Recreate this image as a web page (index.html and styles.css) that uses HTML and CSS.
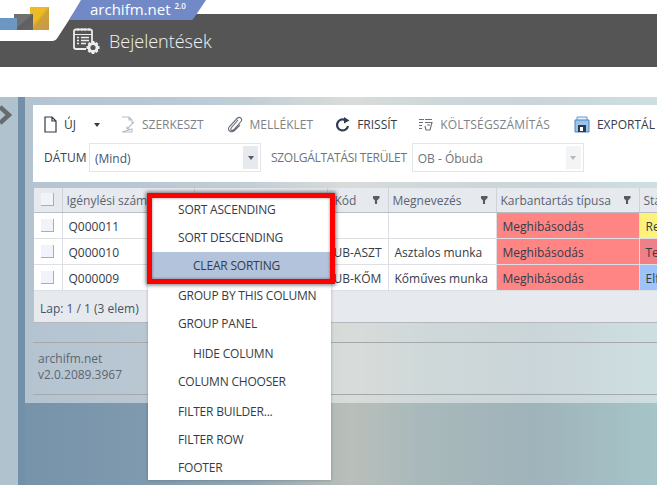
FILE: index.html
```html
<!DOCTYPE html>
<html lang="hu">
  <head>
    <meta charset="UTF-8" />
    <title>Bejelentések</title>
    <link rel="stylesheet" href="styles.css">
  </head>
  <body>
    <header class="topbar">
      <svg class="logo" width="82" height="41" viewBox="0 0 82 41">
        <defs>
          <linearGradient id="gold" x1="0" y1="0" x2="1" y2="1">
            <stop offset="0.45" stop-color="#eebb22" />
            <stop offset="0.55" stop-color="#cfa03a" />
            <stop offset="1" stop-color="#c39a4c" />
          </linearGradient>
          <linearGradient id="grey" x1="0" y1="0" x2="1" y2="1">
            <stop offset="0.45" stop-color="#707070" />
            <stop offset="0.55" stop-color="#5f5f5f" />
            <stop offset="1" stop-color="#666" />
          </linearGradient>
        </defs>
        <path d="M0 0H82L58 37Q56 41 52 41H0Z" fill="#fff" />
        <rect x="30" y="7" width="19" height="23" fill="url(#gold)" />
        <rect x="14" y="14" width="19" height="16" fill="url(#grey)" />
        <rect x="0" y="18" width="17" height="12" fill="#6b97c2" />
      </svg>
      <div class="tab">archifm.net<sup>2.0</sup></div>
      <div class="title">
        <svg width="28" height="28" viewBox="0 0 28 28" fill="none" stroke="#ececec">
          <path d="M19 15V4.500Q19 2.500 17 2.500H3Q1 2.500 1 4.500V20Q1 22 3 22H13" stroke-width="1.800" />
          <path d="M1 7.500H19M5 1V4M9 1V4M12 1V4M16 1V4" />
          <path d="M4 10.500H6M8 10.500H16M4 13.500H6M8 13.500H16M4 16.500H6M8 16.500H13" stroke-width="1.400" />
          <circle cx="20" cy="20.500" r="4" stroke-width="2.800" />
          <path d="M20 14V16M20 25V27M13.500 20.500H15.500M24.500 20.500H26.500M15.500 16L17 17.500M23 23.500L24.500 25M15.500 25L17 23.500M23 17.500L24.500 16" stroke-width="2.800" />
        </svg>
        <h1>Bejelentések</h1>
      </div>
    </header>

    <main class="page">
      <aside class="rail">
        <svg width="12" height="20" viewBox="0 0 12 20" fill="none" stroke="#666b70" stroke-width="4.500">
          <path d="M0 2L9 10L0 18" />
        </svg>
      </aside>
      <div class="strip"></div>
      <div class="stage">
        <section class="panel">
          <div class="toolbar">
            <div class="actions">
              <button class="action new">
                <svg width="13" height="17" viewBox="0 0 13 17" fill="none" stroke="#2f3a48" stroke-width="1.200">
                  <path d="M1 1H8L12 5V16H1ZM8 1V5H12" />
                </svg>
                ÚJ
              </button>
              <span class="caret"></span>
              <button class="action off">
                <svg width="14" height="17" viewBox="0 0 14 17" fill="none" stroke="#b9bdc2" stroke-width="1.100">
                  <path d="M1 1H8L11 4V7M11 13V16H1ZM8 1V4H11M6 13L13 6M6 13V10.500M6 13H8.500" />
                </svg>
                SZERKESZT
              </button>
              <button class="action off">
                <svg width="16" height="17" viewBox="0 0 16 17" fill="none" stroke="#666c74" stroke-width="1.100">
                  <path d="M11 4L4.500 11.500C2.500 14 5 15.500 7 13.500L14 5.500C16 2.500 12.500 0 10 2.500L2.500 10.500C-.5 14 4 18 8 14L13 9" />
                </svg>
                MELLÉKLET
              </button>
              <button class="action refresh">
                <svg width="14" height="15" viewBox="0 0 14 15" fill="none" stroke="#2f3f52" stroke-width="2.200">
                  <path d="M12 9A5.500 5.500 0 1 1 9 3" />
                  <path d="M8 0L13.500 3.500L8 6.500Z" fill="#2f3f52" stroke="none" />
                </svg>
                FRISSÍT
              </button>
              <button class="action off wide">
                <svg width="15" height="15" viewBox="0 0 15 15" fill="none" stroke="#6a7078" stroke-width="1.100">
                  <path d="M1 2.500H6M1 5.500H5M1 8.500H4M1 11.500H4M7 2.500H14M7 5.500H14L12 13H8L7 9M9 8H12" />
                </svg>
                KÖLTSÉGSZÁMÍTÁS
              </button>
              <button class="action">
                <svg width="16" height="17" viewBox="0 0 16 17">
                  <path d="M3 1H13V6H3Z" fill="#e8f2fb" stroke="#5b9bd5" />
                  <path d="M1 4H15V16H1Z" fill="#9cc4e8" stroke="#4a86c0" />
                  <rect x="4" y="9" width="8" height="7" fill="#2f3a48" />
                  <rect x="6" y="11" width="3" height="4" fill="#fff" />
                </svg>
                EXPORTÁL
              </button>
            </div>
            <div class="filters">
              <label>DÁTUM</label>
              <div class="select date"><span>(Mind)</span><i class="drop"></i></div>
              <label class="area-label">SZOLGÁLTATÁSI TERÜLET</label>
              <div class="select locked"><span>OB - Óbuda</span><i class="drop"></i></div>
            </div>
          </div>

          <div class="grid">
            <table>
              <colgroup>
                <col class="c-check" /><col class="c-id" /><col class="c-mid" /><col class="c-code" />
                <col class="c-name" /><col class="c-type" /><col class="c-state" />
              </colgroup>
              <thead>
                <tr>
                  <th><i class="box"></i></th>
                  <th>Igénylési szám</th>
                  <th></th>
                  <th class="filt code-head">Kód</th>
                  <th class="filt">Megnevezés</th>
                  <th class="filt">Karbantartás típusa</th>
                  <th>Státusz</th>
                </tr>
              </thead>
              <tbody>
                <tr>
                  <td><i class="box"></i></td><td>Q000011</td><td></td><td></td><td></td>
                  <td class="red">Meghibásodás</td><td class="yellow">Rendben</td>
                </tr>
                <tr>
                  <td><i class="box"></i></td><td>Q000010</td><td></td><td>UB-ASZT</td><td>Asztalos munka</td>
                  <td class="red">Meghibásodás</td><td class="rose">Teljesítve</td>
                </tr>
                <tr>
                  <td><i class="box"></i></td><td>Q000009</td><td></td><td>UB-KŐM</td><td>Kőműves munka</td>
                  <td class="red">Meghibásodás</td><td class="blue">Elfogadva</td>
                </tr>
              </tbody>
            </table>
            <div class="pager">Lap: 1 / 1 (3 elem)</div>
          </div>

          <div class="band"></div>
          <footer class="about">archifm.net<br />v2.0.2089.3967</footer>
        </section>
      </div>
    </main>

    <ul class="menu">
      <li>SORT ASCENDING</li>
      <li>SORT DESCENDING</li>
      <li class="sub selected">CLEAR SORTING</li>
      <li class="tall">GROUP BY THIS COLUMN</li>
      <li>GROUP PANEL</li>
      <li class="sub tall">HIDE COLUMN</li>
      <li>COLUMN CHOOSER</li>
      <li class="tall">FILTER BUILDER...</li>
      <li>FILTER ROW</li>
      <li>FOOTER</li>
    </ul>
    <div class="highlight"></div>
  </body>
</html>
```

FILE: styles.css
```css
html,
body {
  height: 485px;
  overflow: hidden;
}

body {
  margin: 0;
  position: relative;
  background: #fff;
  font-family: "Open Sans", "Noto Sans", sans-serif;
  font-size: 12px;
  color: #333c48;
}

.topbar {
  position: relative;
  height: 67px;
  box-sizing: border-box;
  background: linear-gradient(#fff 14px, #555 14px);
}

.logo {
  position: absolute;
  left: 0;
  top: 0;
}

.tab {
  position: absolute;
  left: 69px;
  top: 0;
  width: 137px;
  height: 20px;
  box-sizing: border-box;
  padding-left: 21px;
  background: #7289c8;
  clip-path: polygon(12px 0, 100% 0, 125px 18px, 123px 20px, 0 20px);
  color: #fff;
  font-size: 15px;
  line-height: 19px;
}

.tab sup {
  font-size: 8px;
  font-weight: 600;
  line-height: 0;
  margin-left: 4px;
  vertical-align: 6px;
}

.title {
  position: absolute;
  left: 73px;
  top: 27px;
  display: flex;
  align-items: center;
  gap: 8px;
  color: #f2f2f2;
}

.title h1 {
  margin: 0;
  font-size: 18px;
  font-weight: 300;
  line-height: 28px;
}

.page {
  display: flex;
  height: 388px;
  margin-top: 30px;
}

.rail {
  width: 18px;
  padding-top: 8px;
  box-sizing: border-box;
  background: #b0c2ce;
}

.rail svg {
  display: block;
}

.strip {
  width: 7px;
  background: #7290a8;
}

.stage {
  flex: 1;
  min-width: 0;
  background: linear-gradient(90deg, #7793aa, #7f9aae 120px, #8fa6b4 220px, #b9bfba 325px, #a9b9bb 395px, #9fb3ba 510px, #a6c5c8 632px);
}

.panel {
  height: 306px;
  box-sizing: border-box;
  padding-top: 8px;
  padding-left: 8px;
  background: rgba(255, 255, 255, 0.45);
  overflow: hidden;
}

.toolbar {
  height: 77px;
  background: #fff;
  box-sizing: border-box;
  padding: 11px 0 0 11px;
  white-space: nowrap;
}

.actions {
  display: flex;
  align-items: center;
  height: 17px;
  margin-bottom: 10px;
}

.action {
  display: flex;
  align-items: center;
  gap: 7px;
  margin-right: 23px;
  padding: 0;
  border: 0;
  background: none;
  font: inherit;
  color: #333c48;
  flex: none;
}

.action.off {
  color: #7d8288;
}

.action.new {
  margin-right: 18px;
}

.action.refresh {
  margin-right: 21px;
}

.action.wide {
  margin-right: 24px;
  letter-spacing: 0.15px;
}

.caret {
  width: 0;
  height: 0;
  margin-right: 21px;
  border: 3.500px solid transparent;
  border-top: 4px solid #333c48;
  border-bottom: 0;
}

.filters {
  display: flex;
  align-items: center;
  height: 29px;
}

.filters label {
  width: 45px;
  color: #3a4350;
}

.filters .area-label {
  width: auto;
  margin: 0 5px 0 10px;
  letter-spacing: -0.3px;
  color: #6e747b;
}

.select {
  display: flex;
  align-items: center;
  justify-content: space-between;
  width: 172px;
  height: 29px;
  box-sizing: border-box;
  padding: 2px 2px 2px 5px;
  border: 1px solid #e3e6e9;
  color: #44546f;
}

.select span {
  padding-top: 2px;
}

.select .drop {
  display: flex;
  align-items: center;
  justify-content: center;
  width: 15px;
  height: 23px;
  background: #e6eaee;
}

.drop::after {
  content: "";
  border: 3.500px solid transparent;
  border-top: 4px solid #555c66;
  border-bottom: 0;
}

.select.locked {
  color: #6e747b;
}

.select.locked .drop {
  background: #f3f4f5;
}

.select.locked .drop::after {
  border-top-color: #b5b9bd;
}

.grid {
  margin: 6px 0 0 1px;
  background: #e6e9ee;
  height: 135px;
  border-bottom: 1px solid #b4b8bd;
  box-sizing: border-box;
  overflow: hidden;
}

table {
  width: 749px;
  table-layout: fixed;
  border-collapse: collapse;
}

.c-check { width: 28px; }
.c-id { width: 132px; }
.c-mid { width: 133px; }
.c-code { width: 61px; }
.c-name { width: 108px; }
.c-type { width: 143px; }
.c-state { width: 144px; }

th {
  height: 24px;
  box-sizing: border-box;
  padding: 1px 4px 0;
  background: #e6e9ee;
  border: 1px solid #cfd3d9;
  border-top: 0;
  border-bottom: 1px solid #b9bdc4;
  font-weight: 400;
  text-align: left;
  color: #5b6470;
  white-space: nowrap;
  overflow: hidden;
  position: relative;
}

th.code-head {
  padding-left: 7px;
}

.filt::after {
  content: "";
  position: absolute;
  right: 8px;
  top: 8px;
  width: 7px;
  height: 8px;
  background: #555c66;
  clip-path: polygon(0 0, 100% 0, 100% 25%, 65% 55%, 65% 100%, 35% 100%, 35% 55%, 0 25%);
}

td {
  height: 26px;
  box-sizing: border-box;
  padding: 2px 6px 0;
  background: #fff;
  border: 1px solid #dcdfe3;
  border-top: 0;
  color: #333c48;
  white-space: nowrap;
  overflow: hidden;
}

th:first-child,
td:first-child {
  padding: 0 0 0 7px;
  border-left: 0;
}

td.red { background: #ff8585; }
td.yellow { background: #fff27a; }
td.rose { background: #ef8088; }
td.blue { background: #9cc3fa; }

.box {
  display: block;
  width: 12px;
  height: 12px;
  background: #f1f3fa;
  border-right: 1px solid #a9aeb5;
  border-bottom: 1px solid #a9aeb5;
}

.pager {
  padding: 9px 6px;
  color: #4a5360;
}

.band {
  height: 19px;
  border-bottom: 1px solid #a5a8ad;
}

.about {
  height: 52px;
  box-sizing: border-box;
  padding: 8px 5px;
  border-bottom: 1px solid #a5a8ad;
  color: #5d6670;
  line-height: 16px;
}

.menu {
  position: absolute;
  left: 148px;
  top: 196px;
  width: 183px;
  height: 284px;
  margin: 0;
  padding: 0;
  list-style: none;
  background: #fff;
  box-shadow: 0 0 3px rgba(0, 0, 0, 0.25);
  letter-spacing: -0.2px;
  color: #333c48;
}

.menu li {
  height: 28px;
  padding-left: 30px;
  line-height: 28px;
}

.menu .tall {
  height: 30px;
  line-height: 32px;
}

.menu .sub {
  padding-left: 45px;
}

.menu .selected {
  background: #b4c3dc;
}

.highlight {
  position: absolute;
  left: 147px;
  top: 193px;
  width: 178px;
  height: 81px;
  border: 5px solid #f00;
  box-shadow: 0 0 4px 1px rgba(0, 0, 0, 0.55), inset 0 0 3px rgba(0, 0, 0, 0.45);
}
```
